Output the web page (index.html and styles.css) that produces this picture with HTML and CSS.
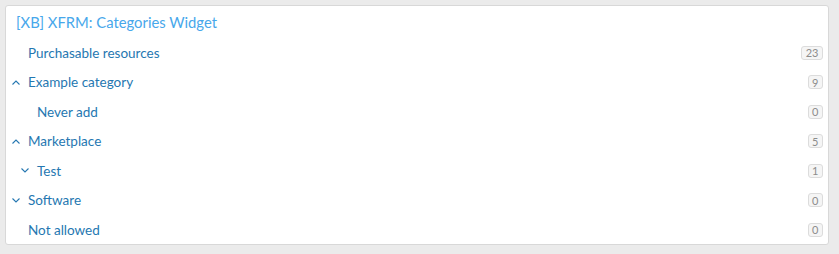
FILE: index.html
```html
<!DOCTYPE html>
<html lang="en">
<head>
<meta charset="utf-8">
<title>Categories Widget</title>
<link rel="stylesheet" href="styles.css">
</head>
<body>
<section class="block">
  <h3 class="block-header"><a href="#">[XB] XFRM: Categories Widget</a></h3>
  <ul class="cat-list">
    <li class="cat-row"><span class="toggle"></span><a class="cat-link" href="#">Purchasable resources</a><span class="badge">23</span></li>
    <li class="cat-row"><span class="toggle"><svg width="8" height="5" viewBox="0 0 8 5"><path d="M0.5 4.5 L4 1 L7.5 4.5" fill="none" stroke="currentColor" stroke-width="1.1"/></svg></span><a class="cat-link" href="#">Example category</a><span class="badge">9</span></li>
    <li class="cat-row level-2"><span class="toggle"></span><a class="cat-link" href="#">Never add</a><span class="badge">0</span></li>
    <li class="cat-row"><span class="toggle"><svg width="8" height="5" viewBox="0 0 8 5"><path d="M0.5 4.5 L4 1 L7.5 4.5" fill="none" stroke="currentColor" stroke-width="1.1"/></svg></span><a class="cat-link" href="#">Marketplace</a><span class="badge">5</span></li>
    <li class="cat-row level-2"><span class="toggle"><svg width="8" height="5" viewBox="0 0 8 5"><path d="M0.5 0.5 L4 4 L7.5 0.5" fill="none" stroke="currentColor" stroke-width="1.1"/></svg></span><a class="cat-link" href="#">Test</a><span class="badge">1</span></li>
    <li class="cat-row"><span class="toggle"><svg width="8" height="5" viewBox="0 0 8 5"><path d="M0.5 0.5 L4 4 L7.5 0.5" fill="none" stroke="currentColor" stroke-width="1.1"/></svg></span><a class="cat-link" href="#">Software</a><span class="badge">0</span></li>
    <li class="cat-row"><span class="toggle"></span><a class="cat-link" href="#">Not allowed</a><span class="badge">0</span></li>
  </ul>
</section>
</body>
</html>
```
FILE: styles.css
```css
html, body {
  margin: 0;
  padding: 0;
}
body {
  background: #ebebeb;
  font-family: Lato, "Open Sans", sans-serif;
  padding: 5px 10px 9px 5px;
}
.block {
  background: #fff;
  border: 1px solid #d8d8d8;
  border-radius: 3px;
  height: 238px;
  box-sizing: content-box;
}
.block-header {
  margin: 0;
  padding: 6px 10px;
  font-size: 14.8px;
  font-weight: normal;
  line-height: 20px;
}
.block-header a {
  color: #47a7eb;
  text-decoration: none;
}
.cat-list {
  list-style: none;
  margin: 0;
  padding: 0;
}
.cat-row {
  display: flex;
  align-items: center;
  height: 29.5px;
  padding: 0 5px 0 6px;
  font-size: 13.5px;
}
.cat-row.level-2 {
  padding-left: 15px;
}
.toggle {
  width: 16px;
  flex: none;
  display: flex;
  align-items: center;
  color: #2577b1;
}
.toggle svg {
  display: block;
}
.cat-link {
  color: #2577b1;
  text-decoration: none;
}
.badge {
  margin-left: auto;
  font-size: 11px;
  line-height: 11px;
  color: #8c8c8c;
  background: #f5f5f5;
  border: 1px solid #dcdcdc;
  border-radius: 3px;
  padding: 0.5px 3.5px;
  min-width: 6px;
  text-align: center;
}
```
